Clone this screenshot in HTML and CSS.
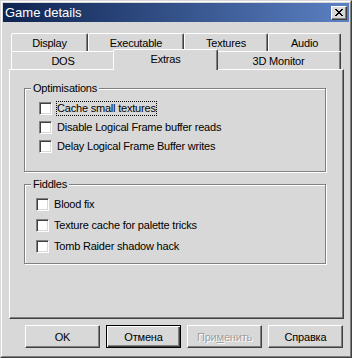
FILE: index.html
```html
<!DOCTYPE html>
<html lang="en">
<head>
  <meta charset="UTF-8" />
  <title>Game details</title>
  <link rel="stylesheet" href="styles.css">
</head>
<body>
  <div class="window">
    <div class="frame">
      <div class="titlebar">
        <span class="title">Game details</span>
        <button class="close" type="button" aria-label="Close">
          <svg width="8" height="7" viewBox="0 0 8 7" shape-rendering="crispEdges">
            <path d="M0 0h2v1h-2z M6 0h2v1h-2z M1 1h2v1h-2z M5 1h2v1h-2z M2 2h4v1h-4z M3 3h2v1h-2z M2 4h4v1h-4z M1 5h2v1h-2z M5 5h2v1h-2z M0 6h2v1h-2z M6 6h2v1h-2z" fill="#000"/>
          </svg>
        </button>
      </div>

      <div class="content">
        <div class="tabs">
          <div class="tab-row">
            <div class="tab w-display">Display</div>
            <div class="tab w-exec">Executable</div>
            <div class="tab w-textures">Textures</div>
            <div class="tab w-audio">Audio</div>
          </div>
          <div class="tab-row">
            <div class="tab w-dos">DOS</div>
            <div class="tab w-extras active">Extras</div>
            <div class="tab w-monitor">3D Monitor</div>
          </div>
        </div>

        <div class="panel">
          <fieldset class="group">
            <legend>Optimisations</legend>
            <div class="rows">
              <label class="check"><span class="box"></span><span class="label focus">Cache small textures</span></label>
              <label class="check"><span class="box"></span><span class="label">Disable Logical Frame buffer reads</span></label>
              <label class="check"><span class="box"></span><span class="label">Delay Logical Frame Buffer writes</span></label>
            </div>
          </fieldset>

          <fieldset class="group fiddles">
            <legend>Fiddles</legend>
            <div class="rows">
              <label class="check"><span class="box"></span><span class="label">Blood fix</span></label>
              <label class="check"><span class="box"></span><span class="label">Texture cache for palette tricks</span></label>
              <label class="check"><span class="box"></span><span class="label">Tomb Raider shadow hack</span></label>
            </div>
          </fieldset>
        </div>

        <div class="buttons">
          <button class="btn" type="button">OK</button>
          <button class="btn default" type="button">Отмена</button>
          <button class="btn" type="button" disabled>При<u>м</u>енить</button>
          <button class="btn" type="button">Справка</button>
        </div>
      </div>
    </div>
  </div>
</body>
</html>
```

FILE: styles.css
```css
* {
  box-sizing: border-box;
}

html, body {
  margin: 0;
  padding: 0;
}

body {
  width: 352px;
  height: 358px;
  overflow: hidden;
  background: #d8d8d8;
  font-family: 'Liberation Sans', Arial, sans-serif;
  font-size: 11px;
  letter-spacing: -0.2px;
  color: #000;
}

.window {
  width: 352px;
  height: 358px;
  background: #d8d8d8;
  border: 1px solid;
  border-color: #d8d8d8 #404040 #404040 #d8d8d8;
}

.frame {
  height: 100%;
  padding: 1px;
  border: 1px solid;
  border-color: #fff #808080 #808080 #fff;
  display: flex;
  flex-direction: column;
}

/* title bar */
.titlebar {
  height: 19px;
  flex: none;
  display: flex;
  align-items: center;
  justify-content: space-between;
  padding: 0 2px;
  background: linear-gradient(to right, #0e2451, #5b80c2);
}

.title {
  color: #fff;
  font-size: 13px;
  letter-spacing: 0;
}

.close {
  width: 16px;
  height: 14px;
  padding: 0;
  display: flex;
  align-items: center;
  justify-content: center;
  background: #d8d8d8;
  border: 1px solid;
  border-color: #fff #404040 #404040 #fff;
  box-shadow: inset -1px -1px #808080;
}

.content {
  flex: 1;
  padding: 11px 5px 0 6px;
}

/* tabs */
.tabs {
  padding-left: 2px;
}

.tab-row {
  display: flex;
  align-items: flex-end;
  height: 18px;
}

.tab {
  height: 18px;
  display: flex;
  align-items: center;
  justify-content: center;
  background: #d8d8d8;
  border: 1px solid;
  border-bottom: none;
  border-color: #fff #404040 #fff #fff;
  border-radius: 2px 2px 0 0;
  box-shadow: inset -1px 0 #808080;
}

.w-display { width: 77px; }
.w-exec { width: 96px; }
.w-textures { width: 84px; }
.w-audio { width: 73px; }
.w-dos { width: 104px; }
.w-extras { width: 105px; }
.w-monitor { width: 125px; }

.tab.active {
  position: relative;
  z-index: 1;
  height: 21px;
  margin: 0 -2px -1px;
  padding-bottom: 2px;
}

/* page */
.panel {
  height: 250px;
  padding: 12px 17px 0 14px;
  border: 1px solid;
  border-color: #fff #404040 #404040 #fff;
  box-shadow: inset -1px -1px #808080;
}

.group {
  margin: 0;
  min-width: 0;
  padding: 0 0 15px 6px;
  border: 1px solid #808080;
  box-shadow: 1px 1px 0 #fff, inset 1px 1px 0 #fff;
}

.group legend {
  padding: 0 2px;
  line-height: 13px;
  background: #d8d8d8;
}

.rows {
  padding: 4px 0 0 8px;
}

.check {
  display: flex;
  align-items: center;
  gap: 4px;
  height: 19px;
}

.fiddles {
  margin-top: 6px;
  padding-bottom: 6px;
}

.fiddles .rows {
  padding: 3px 0 0 5px;
}

.fiddles .check {
  height: 21px;
}

.box {
  width: 13px;
  height: 13px;
  flex: none;
  background: #fff;
  border: 1px solid;
  border-color: #808080 #fff #fff #808080;
  box-shadow: inset 1px 1px #404040, inset -1px -1px #d8d8d8;
}

.label {
  line-height: 13px;
  border: 1px dotted transparent;
}

.label.focus {
  border-color: #000;
}

/* buttons */
.buttons {
  display: flex;
  justify-content: flex-end;
  gap: 6px;
  margin-top: 6px;
  padding-right: 1px;
}

.btn {
  width: 75px;
  height: 23px;
  padding: 0;
  font: inherit;
  letter-spacing: inherit;
  color: #000;
  background: #d8d8d8;
  border: 1px solid;
  border-color: #fff #404040 #404040 #fff;
  box-shadow: inset -1px -1px #808080;
}

.btn.default {
  border-color: #000;
  box-shadow: inset 1px 1px #fff, inset -1px -1px #404040, inset -2px -2px #808080;
}

.btn:disabled {
  color: #a0a0a0;
  text-shadow: 1px 1px #fff;
}
```
